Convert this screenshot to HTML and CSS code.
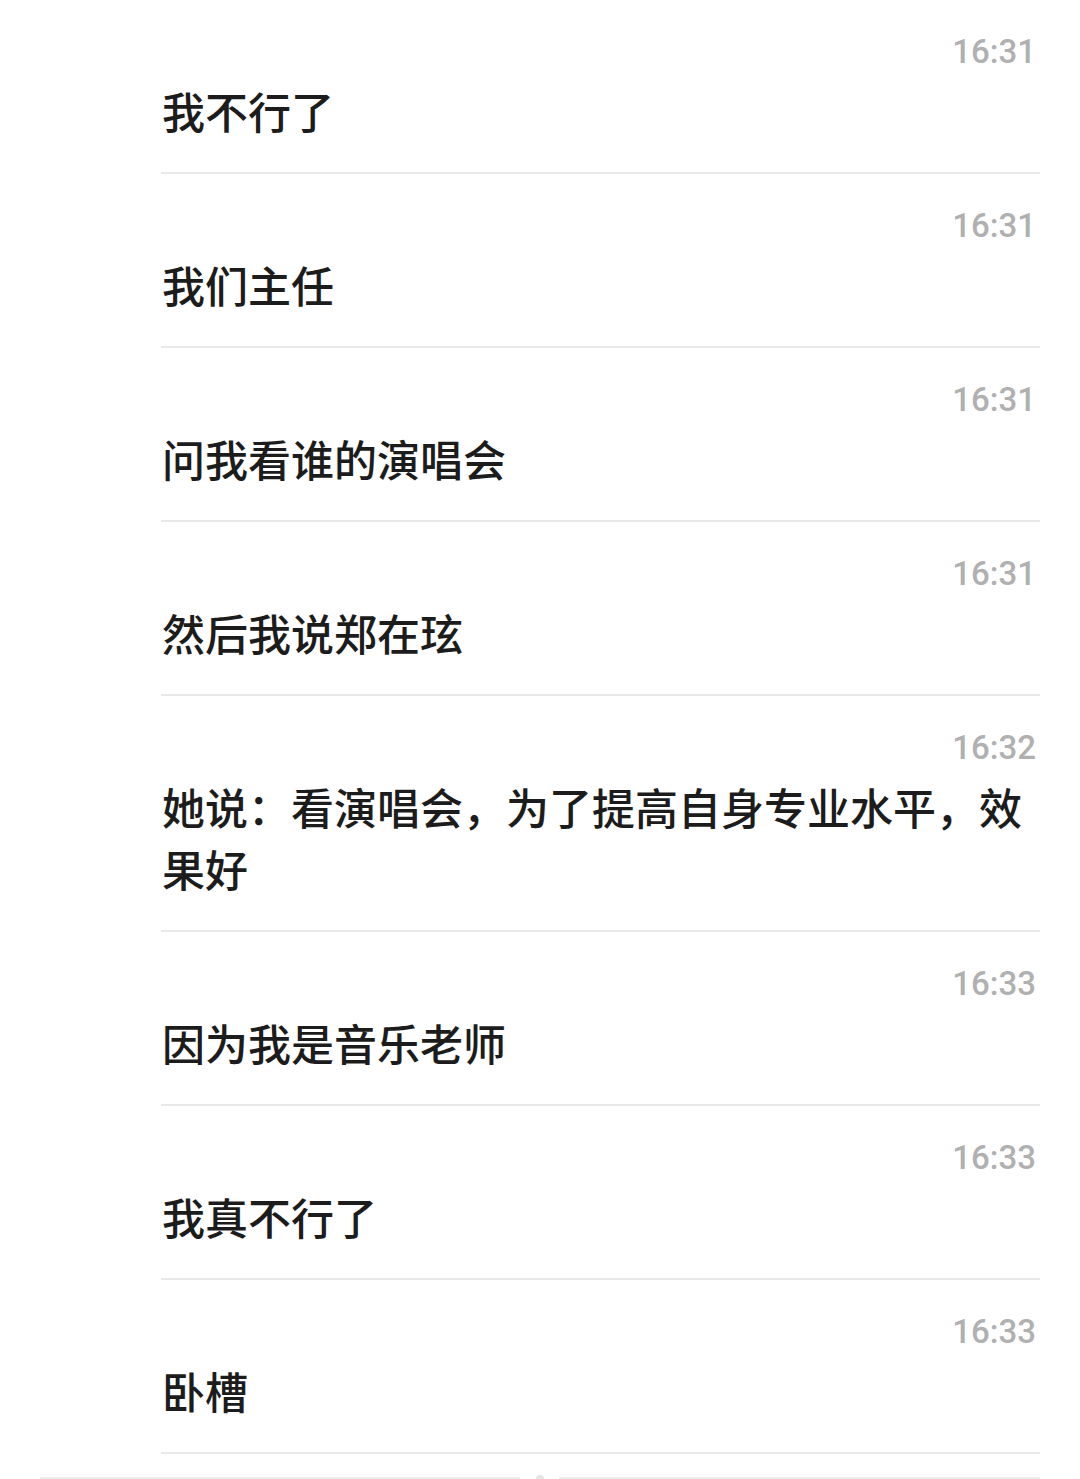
FILE: index.html
```html
<!DOCTYPE html>
<html lang="zh-CN">
<head>
<meta charset="utf-8">
<title>聊天记录</title>
<link rel="stylesheet" href="styles.css">
</head>
<body>
<div class="list">
  <div class="item"><div class="time">16:31</div><div class="msg">我不行了</div></div>
  <div class="item"><div class="time">16:31</div><div class="msg">我们主任</div></div>
  <div class="item"><div class="time">16:31</div><div class="msg">问我看谁的演唱会</div></div>
  <div class="item"><div class="time">16:31</div><div class="msg">然后我说郑在玹</div></div>
  <div class="item"><div class="time">16:32</div><div class="msg">她说：看演唱会，为了提高自身专业水平，效果好</div></div>
  <div class="item"><div class="time">16:33</div><div class="msg">因为我是音乐老师</div></div>
  <div class="item"><div class="time">16:33</div><div class="msg">我真不行了</div></div>
  <div class="item"><div class="time">16:33</div><div class="msg">卧槽</div></div>
</div>
<div class="footer">
  <div class="seg seg-left"></div>
  <div class="bump"></div>
  <div class="seg seg-right"></div>
</div>
</body>
</html>
```
FILE: styles.css
```css
html, body {
  margin: 0;
  padding: 0;
  background: #ffffff;
}
body {
  width: 1080px;
  height: 1479px;
  overflow: hidden;
}
.list {
  margin-left: 161px;
  width: 879px;
}
.item {
  padding: 34px 0 31px;
  border-bottom: 2px solid #e8e8e8;
}
.time {
  font-family: Roboto, "Liberation Sans", Arial, sans-serif;
  font-size: 33px;
  font-weight: 500;
  line-height: 36px;
  color: #b0b0b0;
  text-align: right;
  padding-right: 4px;
  margin-bottom: 9px;
}
.msg {
  font-family: "Noto Sans CJK SC", "Noto Sans", sans-serif;
  font-size: 43px;
  line-height: 62px;
  font-weight: 500;
  color: #1c1c1c;
  padding-left: 1px;
}
.footer {
  margin-top: 21px;
  margin-left: 40px;
  width: 1000px;
  display: flex;
  align-items: flex-end;
  height: 4px;
}
.seg {
  height: 2px;
  background: #ececec;
}
.seg-left { width: 480px; }
.seg-right { width: 481px; }
.bump {
  width: 39px;
  display: flex;
  justify-content: center;
}
.bump::before {
  content: "";
  width: 8px;
  height: 4px;
  border-radius: 4px 4px 0 0;
  background: #e4e4e4;
}
```
